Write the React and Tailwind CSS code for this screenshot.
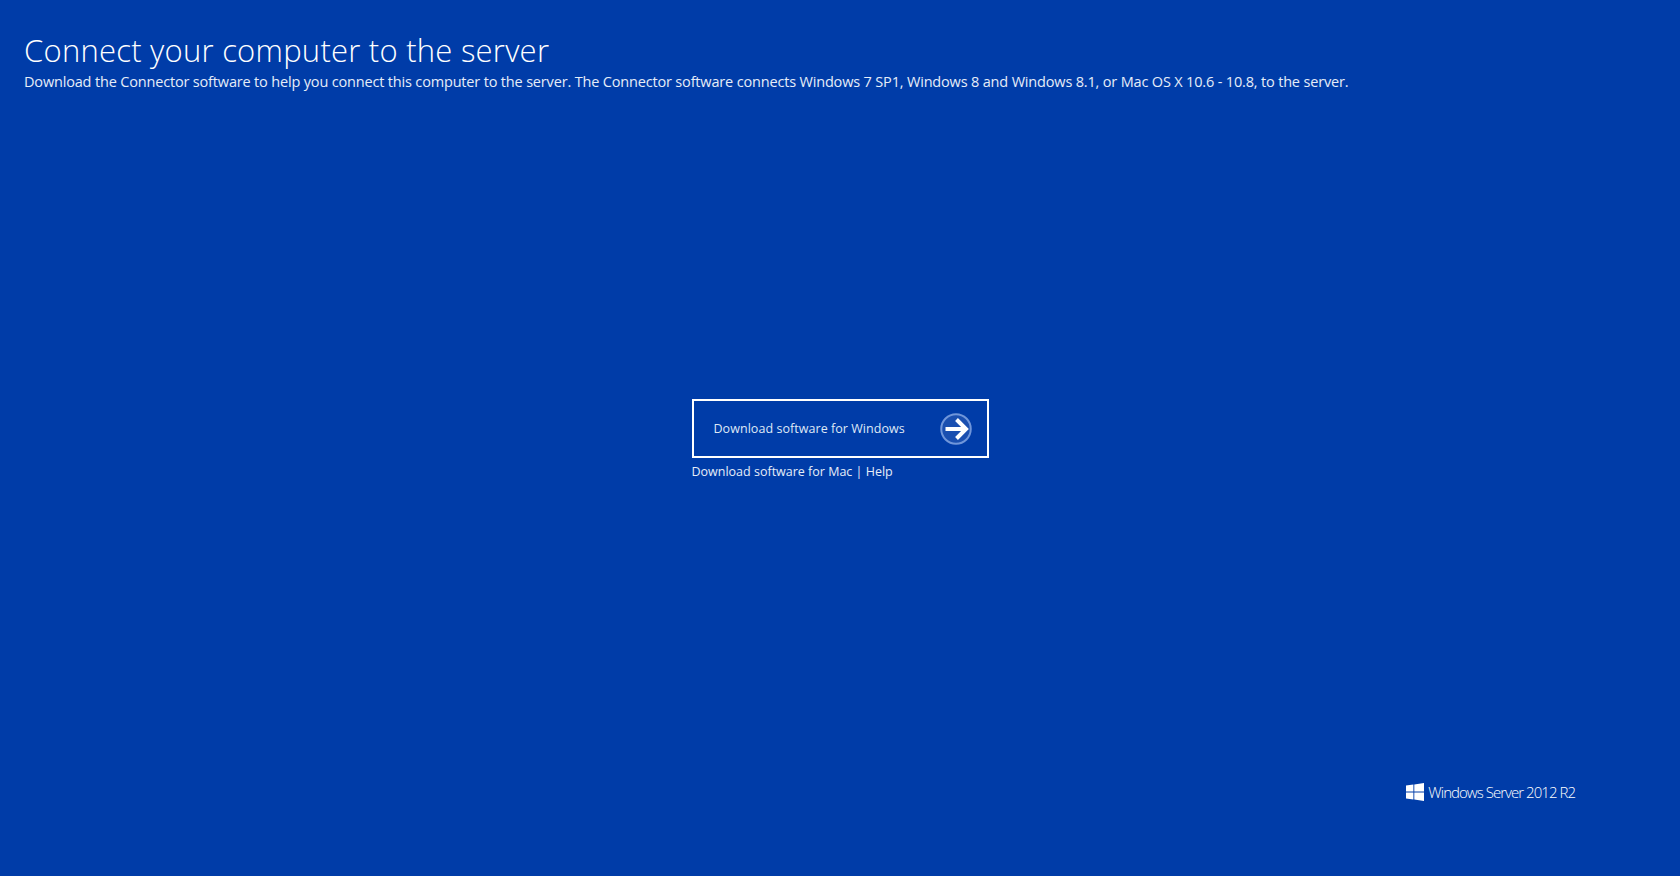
import React from "react";

const WindowsLogo = () => (
  <svg width="18" height="18" viewBox="0 0 18 18" className="shrink-0 fill-white">
    <path d="M0 2.6 7.4 1.5v7H0zM8.3 1.4 18 0v8.5H8.3zM0 9.4h7.4v7L0 15.4zM8.3 9.4H18V18l-9.7-1.4z" />
  </svg>
);

const ArrowCircle = () => (
  <svg width="32" height="32" viewBox="0 0 32 32" fill="none" className="shrink-0">
    <circle cx="16" cy="16" r="14.75" fill="#1a4fb0" stroke="#7096da" strokeWidth="2" />
    <path d="M5.5 16H24" stroke="white" strokeWidth="4" />
    <path d="M16.5 6.5 26 16l-9.5 9.5" stroke="white" strokeWidth="4" />
  </svg>
);

export default function App() {
  return (
    <div className="h-[876px] w-full overflow-hidden bg-[#003ca8] font-['Open_Sans','Noto_Sans',sans-serif] text-white flex flex-col">
      <header className="pl-6 pt-[29px]">
        <h1 className="text-[31px] leading-[42px] font-light tracking-[0.24px]">
          Connect your computer to the server
        </h1>
        <p className="mt-px text-[14.5px] leading-[20px] text-[#e6edf8] tracking-[-0.17px]">
          Download the Connector software to help you connect this computer to the server. The Connector software connects Windows 7 SP1, Windows 8 and Windows 8.1, or Mac OS X 10.6 - 10.8, to the server.
        </p>
      </header>

      <main className="mt-[307px] flex justify-center">
        <div className="w-[297px]">
          <button className="w-full h-[59px] border-2 border-white flex items-center justify-between pl-[20px] pr-[15px]">
            <span className="relative top-px text-[12.5px] tracking-[0.05px] text-[#dfe8f6]">Download software for Windows</span>
            <ArrowCircle />
          </button>
          <div className="mt-[4px] text-[12.5px] leading-[20px] text-[#e6edf8]">
            Download software for Mac | Help
          </div>
        </div>
      </main>

      <footer className="mt-[300px] flex justify-end items-center gap-[4px] pr-[105px]">
        <WindowsLogo />
        <span className="text-[15px] leading-[20px] font-light tracking-[-0.96px]">Windows Server 2012 R2</span>
      </footer>
    </div>
  );
}
